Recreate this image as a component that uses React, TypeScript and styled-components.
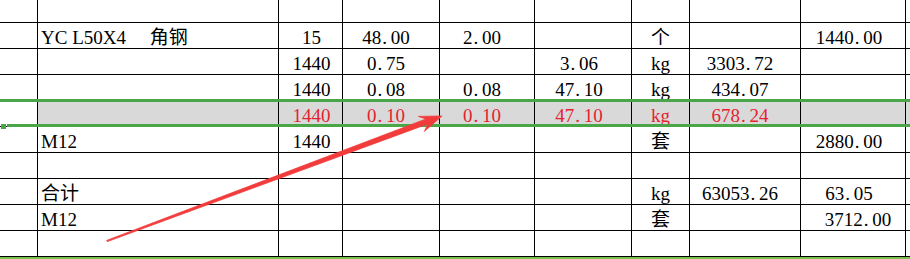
import React from "react"
import styled, { createGlobalStyle } from "styled-components"

const GlobalStyle = createGlobalStyle`
  html, body {
    margin: 0;
    padding: 0;
    background: #fff;
  }
`

type CellData = {
  text?: string
  align?: "left" | "center"
  shift?: number
}

type RowData = {
  cells: CellData[]
  selected?: boolean
}

const L = (text: string): CellData => ({ text, align: "left" })
const C = (text: string, shift = 0): CellData => ({ text, align: "center", shift })
const E: CellData = {}

// columns: gutter, name, qty, a, b, c, unit, weight, total
const rows: RowData[] = [
  { cells: [E, L("YC L50X4     角钢"), C("15", 1), C("48.00", -5), C("2.00", -5), E, C("个"), E, C("1440.00", -4)] },
  { cells: [E, E, C("1440", 1), C("0.75", -5), E, C("3.06", -4), C("kg"), C("3303.72", -5), E] },
  { cells: [E, E, C("1440", 1), C("0.08", -5), C("0.08", -5), C("47.10", -4), C("kg"), C("434.07", -5), E] },
  { cells: [E, E, C("1440", 1), C("0.10", -5), C("0.10", -5), C("47.10", -4), C("kg"), C("678.24", -5), E], selected: true },
  { cells: [E, L("M12"), C("1440", 1), E, E, E, C("套"), E, C("2880.00", -4)] },
  { cells: [E, E, E, E, E, E, E, E, E] },
  { cells: [E, L("合计"), E, E, E, E, C("kg"), C("63053.26", -5), C("63.05", -4)] },
  { cells: [E, L("M12"), E, E, E, E, C("套"), E, C("3712.00", 5)] },
  { cells: [E, E, E, E, E, E, E, E, E] },
]

// the sheet font draws "." half an em wide, so give the dot its own slot
const renderText = (text?: string) => {
  if (!text || !/^\d+\.\d+$/.test(text)) return text
  const [whole, frac] = text.split(".")
  return (
    <>
      {whole}
      <Dot>.</Dot>
      {frac}
    </>
  )
}

const App: React.FC = () => {
  return (
    <Sheet>
      <GlobalStyle />
      <Row $top>
        {Array.from({ length: 10 }).map((_, i) => (
          <Cell key={i} $last={i === 9} />
        ))}
      </Row>

      {rows.map((row, r) => (
        <Row key={r}>
          {[...row.cells, E].map((cell, i) => (
            <Cell
              key={i}
              $last={i === 9}
              $align={cell.align || "center"}
              $shift={cell.shift || 0}
              $shade={!!row.selected && i > 0}
              $red={!!row.selected}
            >
              {renderText(cell.text)}
            </Cell>
          ))}
        </Row>
      ))}

      <BottomEdge />

      <Selection>
        <SelectionEdge />
        <FillHandle />
      </Selection>

      <Arrow viewBox="0 0 910 259" width="910" height="259">
        <polygon
          points="107.3,241.6 427.9,123.9 424.4,131.4 442,116 418.4,116.4 426.1,118.9 106.7,240.4"
          fill="#f23b3b"
          stroke="#f23b3b"
          strokeWidth="0.8"
          strokeLinejoin="round"
        />
      </Arrow>
    </Sheet>
  )
}

const Sheet = styled.div`
  position: relative;
  width: 910px;
  height: 259px;
  overflow: hidden;
  font-family: "Liberation Serif", "Noto Sans CJK SC", serif;
  font-size: 19px;
  color: #000;
`

const Row = styled.div<{ $top?: boolean }>`
  display: grid;
  grid-template-columns: 38px 241px 64px 97px 95px 97px 58px 111px 105px 1fr;
  height: ${p => (p.$top ? 23 : 26)}px;
  box-sizing: border-box;
  border-bottom: 1px solid #000;
`

const Cell = styled.div<{
  $last?: boolean
  $align?: "left" | "center"
  $shift?: number
  $shade?: boolean
  $red?: boolean
}>`
  box-sizing: border-box;
  border-right: ${p => (p.$last ? "none" : "1px solid #000")};
  background: ${p => (p.$shade ? "#d9d9d9" : "transparent")};
  color: ${p => (p.$red ? "#e5222f" : "#000")};
  text-align: ${p => p.$align};
  padding-top: 4px;
  padding-left: ${p => (p.$align === "left" ? 3 : Math.max(p.$shift || 0, 0) * 2)}px;
  padding-right: ${p => (p.$align === "left" ? 0 : Math.max(-(p.$shift || 0), 0) * 2)}px;
  line-height: 21px;
  white-space: pre;
  overflow: hidden;
`

const Dot = styled.span`
  display: inline-block;
  width: 0.5em;
  padding-left: 1px;
  box-sizing: border-box;
  text-align: left;
`

const BottomEdge = styled.div`
  height: 3px;
  background: #7cbf4d;
`

const Selection = styled.div`
  position: absolute;
  left: 0;
  right: 0;
  top: 99px;
  height: 28px;
  box-sizing: border-box;
  border-top: 3px solid #4ba64a;
  pointer-events: none;
`

const SelectionEdge = styled.div`
  position: absolute;
  left: 7px;
  right: 0;
  bottom: 0;
  height: 3px;
  background: #4ba64a;
`

const FillHandle = styled.div`
  position: absolute;
  left: 1px;
  bottom: -2px;
  width: 5px;
  height: 5px;
  background: #4ba64a;
`

const Arrow = styled.svg`
  position: absolute;
  left: 0;
  top: 0;
  pointer-events: none;
`

export default App
